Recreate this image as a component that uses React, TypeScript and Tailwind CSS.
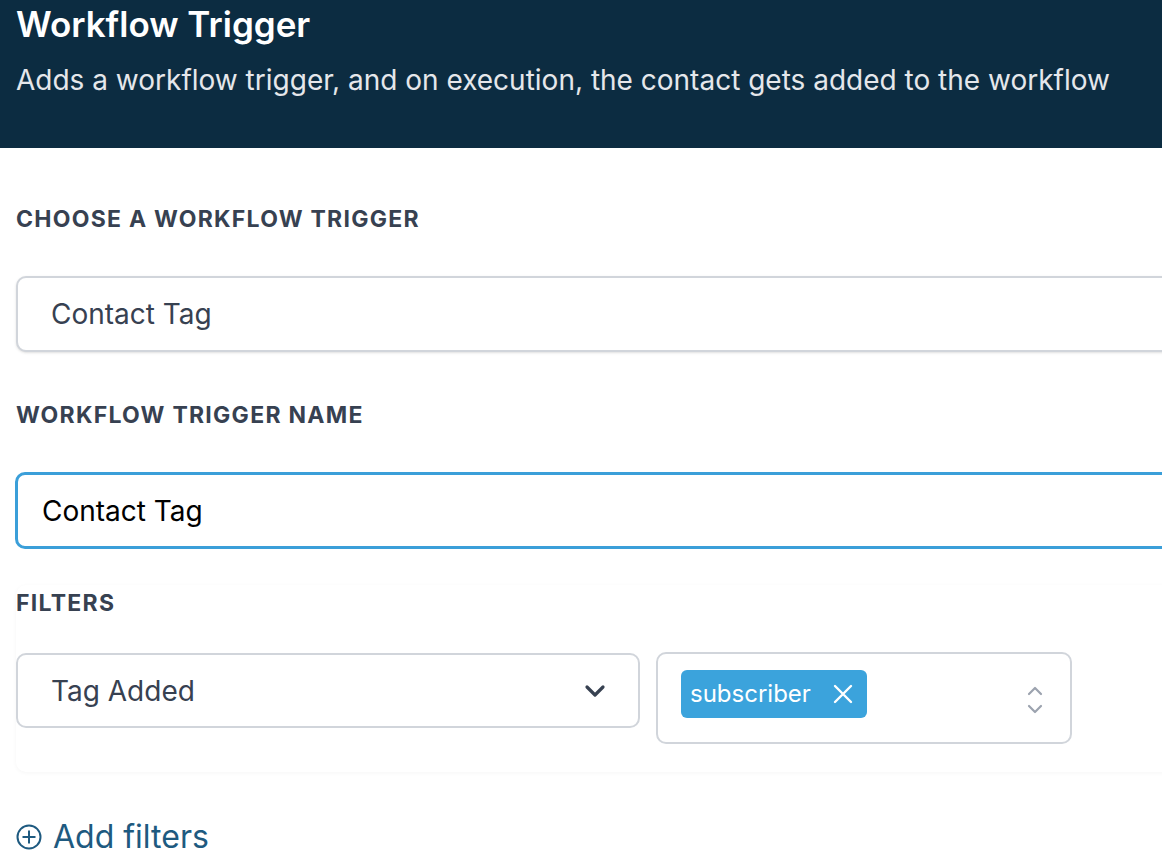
import React from 'react';

export default function App() {
  return (
    <div className="w-[1162px] h-[864px] overflow-hidden bg-white" style={{ fontFamily: 'Inter, "Noto Sans", sans-serif' }}>
      {/* Header */}
      <div className="h-[148px] bg-[#0c2c41] px-4 pt-[4px]">
        <h1 className="text-[35px] leading-[40px] font-semibold text-white whitespace-nowrap">Workflow Trigger</h1>
        <p className="mt-[20px] text-[28px] leading-[32px] text-[#e5e7eb] whitespace-nowrap">
          Adds a workflow trigger, and on execution, the contact gets added to the workflow
        </p>
      </div>

      {/* Body */}
      <div className="pl-4 w-[1400px]">
        <div className="mt-[57px] text-[23px] leading-[28px] font-bold tracking-[0.055em] text-[#374151] uppercase">
          Choose a workflow trigger
        </div>
        <div className="mt-[43px] h-[76px] rounded-[10px] border-2 border-[#d1d5db] bg-white shadow-sm flex items-center pl-[33px]">
          <span className="text-[28px] text-[#374151]">Contact Tag</span>
        </div>

        <div className="mt-[49px] text-[23px] leading-[28px] font-bold tracking-[0.055em] text-[#374151] uppercase">
          Workflow trigger name
        </div>
        <div className="mt-[43px] -ml-[1px] h-[77px] rounded-[10px] border-[3px] border-[#3b9fd9] bg-white flex items-center pl-[24px]">
          <span className="text-[28px] text-black">Contact Tag</span>
        </div>

        {/* Filters card */}
        <div className="mt-[36px] rounded-[10px] bg-white shadow-[0_1px_4px_rgba(0,0,0,0.04)] pt-[4px] pb-[28px]">
          <div className="text-[23px] leading-[28px] font-bold tracking-[0.055em] text-[#374151] uppercase">Filters</div>
          <div className="mt-[36px] flex items-start gap-[16px]">
            <div className="w-[624px] h-[75px] rounded-[10px] border-2 border-[#d1d5db] bg-white flex items-center justify-between pl-[33px] pr-[32px]">
              <span className="text-[28px] text-[#374151]">Tag Added</span>
              <svg width="22" height="14" viewBox="0 0 22 14" fill="none">
                <path d="M3 3l8 8 8-8" stroke="#374151" strokeWidth="3.2" strokeLinecap="round" strokeLinejoin="round" />
              </svg>
            </div>
            <div className="-mt-[1px] w-[416px] h-[92px] rounded-[10px] border-2 border-[#d1d5db] bg-white flex items-start justify-between pl-[23px] pr-[26px] pt-[16px]">
              <div className="h-[48px] rounded-[6px] bg-[#3ba3dc] flex items-center pl-[9px] pr-[14px] gap-[22px]">
                <span className="text-[24px] text-white">subscriber</span>
                <svg width="20" height="20" viewBox="0 0 20 20" fill="none">
                  <path d="M2 2l16 16M18 2L2 18" stroke="white" strokeWidth="2.4" strokeLinecap="round" />
                </svg>
              </div>
              <svg className="mt-[15px]" width="18" height="30" viewBox="0 0 18 30" fill="none">
                <path d="M3 9l6-6 6 6M3 21l6 6 6-6" stroke="#9ca3af" strokeWidth="2.2" strokeLinecap="round" strokeLinejoin="round" />
              </svg>
            </div>
          </div>
        </div>

        {/* Add filters */}
        <div className="mt-[45px] flex items-center gap-[11px] text-[#1e5a80]">
          <svg width="26" height="26" viewBox="0 0 26 26" fill="none">
            <circle cx="13" cy="13" r="11.5" stroke="currentColor" strokeWidth="2" />
            <path d="M13 6.5v13M6.5 13h13" stroke="currentColor" strokeWidth="2" />
          </svg>
          <span className="text-[32px] leading-[40px]">Add filters</span>
        </div>
      </div>
    </div>
  );
}
